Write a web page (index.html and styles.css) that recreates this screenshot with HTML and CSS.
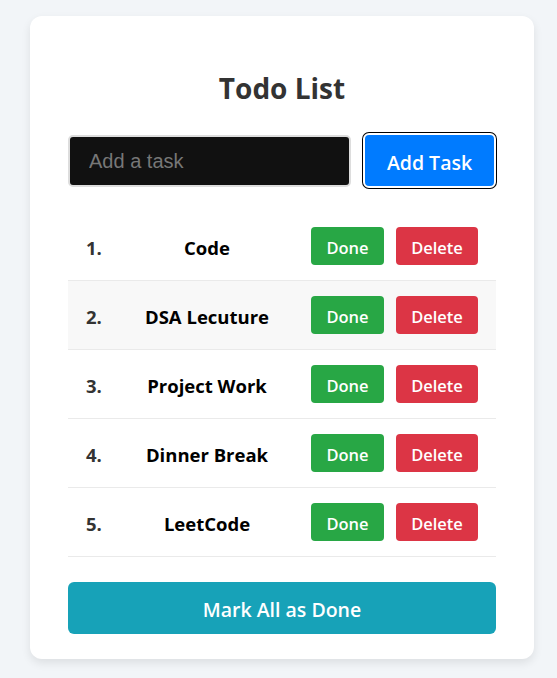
FILE: index.html
```html
<!DOCTYPE html>
<html lang="en">
<head>
<meta charset="utf-8">
<title>Todo List</title>
<link rel="stylesheet" href="styles.css">
</head>
<body>
<div class="card">
  <h1 class="title">Todo List</h1>
  <div class="form">
    <input class="task-input" type="text" placeholder="Add a task">
    <button class="btn-add">Add Task</button>
  </div>
  <div class="list">
    <div class="row"><span class="num">1.</span><span class="task">Code</span><span class="actions"><button class="btn btn-done">Done</button><button class="btn btn-delete">Delete</button></span></div>
    <div class="row alt"><span class="num">2.</span><span class="task">DSA Lecuture</span><span class="actions"><button class="btn btn-done">Done</button><button class="btn btn-delete">Delete</button></span></div>
    <div class="row"><span class="num">3.</span><span class="task">Project Work</span><span class="actions"><button class="btn btn-done">Done</button><button class="btn btn-delete">Delete</button></span></div>
    <div class="row"><span class="num">4.</span><span class="task">Dinner Break</span><span class="actions"><button class="btn btn-done">Done</button><button class="btn btn-delete">Delete</button></span></div>
    <div class="row"><span class="num">5.</span><span class="task">LeetCode</span><span class="actions"><button class="btn btn-done">Done</button><button class="btn btn-delete">Delete</button></span></div>
  </div>
  <button class="btn-all">Mark All as Done</button>
</div>
</body>
</html>
```
FILE: styles.css
```css
* { box-sizing: border-box; }
body {
  margin: 0;
  background: #f2f5f8;
  font-family: "Open Sans", "Noto Sans", sans-serif;
  padding: 16px 23px 19px 30px;
}
.card {
  width: 504px;
  background: #fff;
  border-radius: 12px;
  box-shadow: 0 4px 10px rgba(0,0,0,0.09);
  padding: 38px 38px 25px;
}
.title {
  margin: 17px 0 28px;
  height: 34px;
  line-height: 34px;
  font-size: 28px;
  font-weight: 700;
  color: #333;
  text-align: center;
}
.form {
  display: flex;
  align-items: center;
  gap: 12px;
  height: 55px;
  margin-bottom: 24px;
}
.task-input {
  width: 283px;
  height: 52px;
  background: #111;
  border: 2px solid #ddd;
  border-radius: 5px;
  padding: 2px 19px 0;
  font-family: "Liberation Sans", Arial, sans-serif;
  font-size: 20px;
  color: #eee;
  outline: none;
}
.task-input::placeholder { color: #777; }
.btn-add {
  width: 134px;
  height: 55px;
  background: #007bff;
  border: 2px solid #fff;
  box-shadow: 0 0 0 1px #000;
  border-radius: 6px;
  color: #fff;
  font-family: inherit;
  font-size: 19.5px;
  font-weight: 600;
  padding: 3px 0 0;
}
.list { margin-bottom: 25px; }
.row {
  display: grid;
  grid-template-columns: 53px 172px 1fr;
  align-items: center;
  height: 69px;
  border-bottom: 1px solid #eaeaea;
}
.row.alt { background: #f8f8f8; }
.num {
  padding-left: 18px;
  padding-top: 2px;
  font-size: 18.5px;
  font-weight: 700;
  color: #333;
}
.task {
  text-align: center;
  padding-top: 2px;
  font-size: 18.5px;
  font-weight: 700;
  color: #000;
  white-space: nowrap;
}
.actions {
  display: flex;
  gap: 12px;
  padding-left: 18px;
}
.btn {
  height: 38px;
  border: none;
  border-radius: 4px;
  color: #fff;
  font-family: inherit;
  font-size: 16.5px;
  font-weight: 600;
  padding: 2px 0 0;
}
.btn-done { width: 73px; background: #28a745; }
.btn-delete { width: 82px; background: #dc3545; }
.btn-all {
  display: block;
  width: 100%;
  height: 52px;
  background: #17a2b8;
  border: none;
  border-radius: 6px;
  color: #fff;
  font-family: inherit;
  font-size: 19.5px;
  font-weight: 600;
  padding: 2px 0 0;
}
```
